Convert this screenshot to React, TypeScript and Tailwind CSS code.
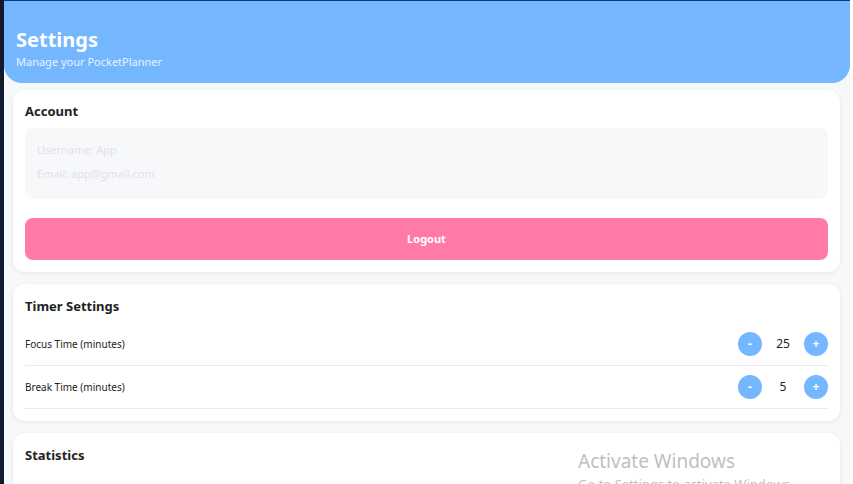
import React from "react";

function Stepper({ value }: { value: number }) {
  return (
    <div className="flex items-center">
      <button className="w-6 h-6 rounded-full bg-[#74b7ff] text-white text-[12px] font-bold flex items-center justify-center leading-none">-</button>
      <span className="w-[42px] text-center text-[12px] text-[#222]">{value}</span>
      <button className="w-6 h-6 rounded-full bg-[#74b7ff] text-white text-[12px] font-bold flex items-center justify-center leading-none">+</button>
    </div>
  );
}

export default function App() {
  return (
    <div
      className="relative w-full h-[484px] overflow-hidden flex bg-white"
      style={{ fontFamily: '"Noto Sans", "Open Sans", sans-serif' }}
    >
      <div className="w-[4px] h-full bg-[#111a2e] shrink-0" />
      <div className="flex-1 flex flex-col bg-[#f7f8fa]">
        <div className="h-[1px] bg-[#0b3a78] shrink-0" />
        <div className="bg-[#74b7ff] rounded-b-[18px] h-[82px] shrink-0 px-3 pt-[25px]">
          <div className="text-white font-bold text-[20px] leading-[28px]">Settings</div>
          <div className="text-[#e6f2ff] text-[11px] leading-[16px]">Manage your PocketPlanner</div>
        </div>
        <div className="flex flex-col gap-3 pl-[9px] pr-[10px] pt-[7px]">
          <div className="bg-white rounded-xl shadow-[0_1px_4px_rgba(0,0,0,0.08)] px-3 pt-[12px] pb-[12px]">
            <div className="text-[13px] font-bold text-[#222] leading-[18px]">Account</div>
            <div className="mt-[8px] bg-[#f7f8fa] rounded-lg h-[71px] px-3 pt-[14px] flex flex-col gap-[8px]">
              <div className="text-[11px] text-[#dfe2e6] leading-[16px]">Username: App</div>
              <div className="text-[11px] text-[#dfe2e6] leading-[16px]">Email: app@gmail.com</div>
            </div>
            <button className="mt-[19px] w-full h-[42px] rounded-lg bg-[#ff7aa8] text-white text-[11px] font-bold">Logout</button>
          </div>
          <div className="bg-white rounded-xl shadow-[0_1px_4px_rgba(0,0,0,0.08)] px-3 pt-[13px] pb-[12px]">
            <div className="text-[13px] font-bold text-[#222] leading-[18px]">Timer Settings</div>
            <div className="mt-[8px] flex items-center justify-between h-[43px] border-b border-[#e8eaed]">
              <span className="text-[10px] text-[#222]">Focus Time (minutes)</span>
              <Stepper value={25} />
            </div>
            <div className="flex items-center justify-between h-[43px] border-b border-[#e8eaed]">
              <span className="text-[10px] text-[#222]">Break Time (minutes)</span>
              <Stepper value={5} />
            </div>
          </div>
          <div className="bg-white rounded-xl shadow-[0_1px_4px_rgba(0,0,0,0.08)] px-3 pt-[13px] pb-[12px]">
            <div className="text-[13px] font-bold text-[#222] leading-[18px]">Statistics</div>
            <div className="mt-[19px] flex items-center justify-between">
              <span className="text-[10px] text-[#222]">Total Tasks Created</span>
              <span className="text-[10px] text-[#74b7ff] font-bold">0</span>
            </div>
          </div>
        </div>
      </div>
      <div className="w-[3px] h-full bg-white shrink-0" />
      <div className="absolute left-[578px] top-[449px] pointer-events-none">
        <div className="text-[19px] text-[#bfbfbf] leading-[24px]">Activate Windows</div>
        <div className="text-[13px] text-[#bfbfbf] leading-[18px] mt-[2px]">Go to Settings to activate Windows.</div>
      </div>
    </div>
  );
}
